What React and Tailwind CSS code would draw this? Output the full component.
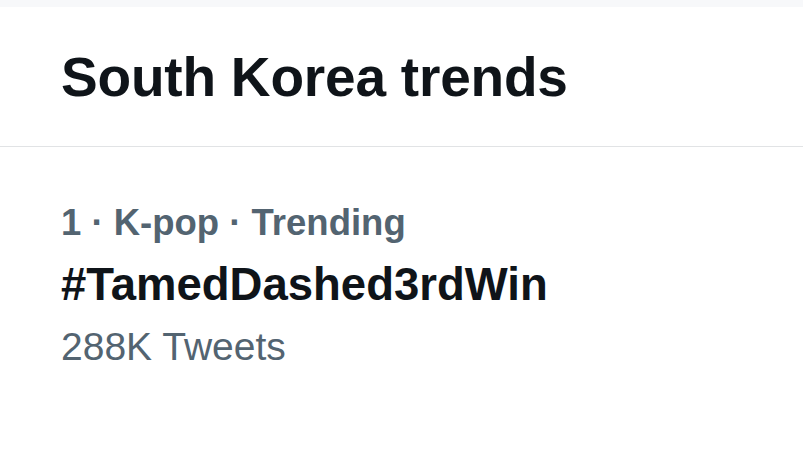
export default function App() {
  return (
    <div className="h-[450px] w-[803px] overflow-hidden bg-white font-['Liberation_Sans',Arial,sans-serif]">
      <div className="h-[7px] bg-[#f7f8fa]" />
      <header className="border-b border-[#e1e3e5] px-[61px] pb-[37px] pt-[38px]">
        <h1 className="text-[55px] font-bold leading-[64px] tracking-[-0.2px] text-[#0f1419]">South Korea trends</h1>
      </header>
      <section className="px-[61px] pt-[54px]">
        <div className="text-[36.5px] font-bold leading-[44px] text-[#536471]">1 · K-pop · Trending</div>
        <div className="mt-[14px] text-[45.5px] font-bold leading-[52px] text-[#0f1419]">#TamedDashed3rdWin</div>
        <div className="mt-[12px] text-[39px] leading-[48px] text-[#536471]">288K Tweets</div>
      </section>
    </div>
  );
}
